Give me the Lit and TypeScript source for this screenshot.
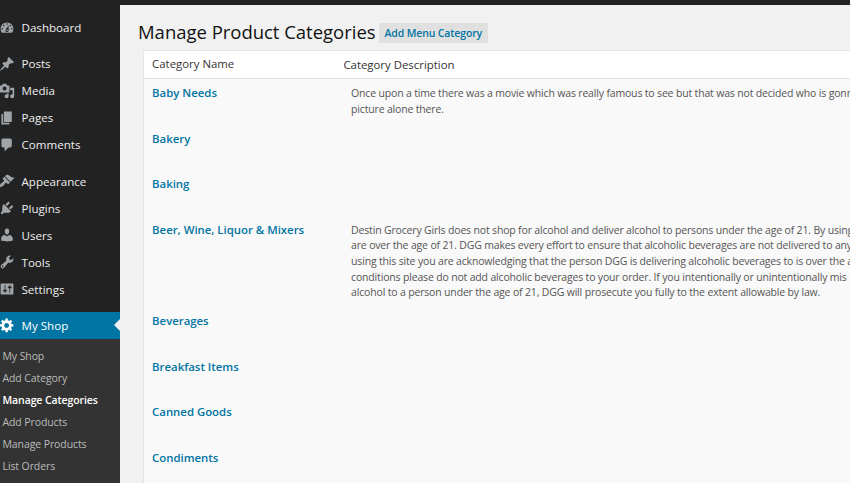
import { LitElement, html, css, svg } from "lit";
import { customElement } from "lit/decorators.js";
import { classMap } from "lit/directives/class-map.js";

const icons: Record<string, string> = {
  dashboard:
    "M3.76 16h12.48c1.1-1.37 1.76-3.11 1.76-5 0-4.42-3.58-8-8-8s-8 3.58-8 8c0 1.89.66 3.63 1.76 5zM10 4c.55 0 1 .45 1 1s-.45 1-1 1-1-.45-1-1 .45-1 1-1zM6 6c.55 0 1 .45 1 1s-.45 1-1 1-1-.45-1-1 .45-1 1-1zm8 0c.55 0 1 .45 1 1s-.45 1-1 1-1-.45-1-1 .45-1 1-1zm-5.37 5.55L12 7v6c0 1.1-.9 2-2 2s-2-.9-2-2c0-.57.24-1.08.63-1.45zM4 10c.55 0 1 .45 1 1s-.45 1-1 1-1-.45-1-1 .45-1 1-1zm12 0c.55 0 1 .45 1 1s-.45 1-1 1-1-.45-1-1 .45-1 1-1zm-5 3c0-.55-.45-1-1-1s-1 .45-1 1 .45 1 1 1 1-.45 1-1z",
  post: "M10.44 3.02l1.82-1.82 6.36 6.35-1.83 1.82c-1.05-.68-2.48-.57-3.41.36l-.75.75c-.92.93-1.04 2.35-.35 3.41l-1.83 1.82-2.41-2.41-2.8 2.79c-.42.42-3.38 2.71-3.8 2.29s1.86-3.39 2.28-3.81l2.79-2.79L4.1 9.36l1.83-1.82c1.05.69 2.48.57 3.4-.36l.75-.75c.93-.92 1.05-2.35.36-3.41z",
  media:
    "M13 11V4c0-.55-.45-1-1-1h-1.67L9 1H5L3.67 3H2c-.55 0-1 .45-1 1v7c0 .55.45 1 1 1h10c.55 0 1-.45 1-1zM7 4.5c1.38 0 2.5 1.12 2.5 2.5S8.38 9.5 7 9.5 4.5 8.38 4.5 7 5.62 4.5 7 4.5zM14 6h5v10.5c0 1.38-1.12 2.5-2.5 2.5S14 17.88 14 16.5s1.12-2.5 2.5-2.5c.17 0 .34.02.5.05V9h-3V6zm-4 8.05V13h2v3.5c0 1.38-1.12 2.5-2.5 2.5S7 17.88 7 16.5 8.12 14 9.5 14c.17 0 .34.02.5.05z",
  page: "M6 15V2h10v13H6zm-1 1h8v2H3V5h2v11z",
  comment:
    "M5 2h9q.82 0 1.41.59T16 4v7q0 .82-.59 1.41T14 13h-2l-5 5v-5H5q-.82 0-1.41-.59T3 11V4q0-.82.59-1.41T5 2z",
  appearance:
    "M14.48 11.06L7.41 3.99l1.5-1.5c.5-.56 2.3-.47 3.51.32 1.21.8 1.43 1.28 2.91 2.1 1.18.64 2.45 1.26 4.45.85zm-.71.71L6.7 4.7 4.93 6.47c-.39.39-.39 1.02 0 1.41l1.06 1.06c.39.39.39 1.03 0 1.42-.6.6-1.43 1.11-2.21 1.69-.35.26-.7.53-1.01.84C1.43 14.23.4 16.08 1.4 17.07c.99 1 2.84-.03 4.18-1.36.31-.31.58-.66.85-1.02.57-.78 1.08-1.61 1.69-2.21.39-.39 1.02-.39 1.41 0l1.06 1.06c.39.39 1.02.39 1.41 0z",
  plugin:
    "M13.11 4.36L9.87 7.6 8 5.73l3.24-3.24c.35-.34 1.05-.2 1.56.32.52.51.66 1.21.31 1.55zm-8 1.77l.91-1.12 9.01 9.01-1.19.84c-.71.71-2.63 1.16-3.82 1.16H6.14L4.9 17.26c-.59.59-1.54.59-2.12 0-.59-.58-.59-1.53 0-2.12l1.24-1.24v-3.88c0-1.13.4-3.19 1.09-3.89zm7.26 3.97l3.24-3.24c.34-.35 1.04-.21 1.55.31.52.51.66 1.21.31 1.55l-3.24 3.25z",
  user: "M10 9.25c-2.27 0-2.73-3.44-2.73-3.44C7 4.02 7.82 2 9.97 2c2.16 0 2.98 2.02 2.71 3.81 0 0-.41 3.44-2.68 3.44zm0 2.57L12.72 10c2.39 0 4.52 2.33 4.52 4.53v2.49s-3.65 1.13-7.24 1.13c-3.65 0-7.24-1.13-7.24-1.13v-2.49c0-2.25 1.94-4.48 4.47-4.48z",
  tools:
    "M16.68 9.77c-1.34 1.34-3.3 1.67-4.95.99l-5.41 6.52c-.99.99-2.59.99-3.58 0s-.99-2.59 0-3.57l6.52-5.42c-.68-1.65-.35-3.61.99-4.95 1.28-1.28 3.12-1.62 4.72-1.06l-2.89 2.89 2.82 2.82 2.86-2.87c.53 1.58.18 3.39-1.08 4.65zM3.81 16.21c.4.39 1.04.39 1.43 0 .4-.4.4-1.04 0-1.43-.39-.4-1.03-.4-1.43 0-.39.39-.39 1.03 0 1.43z",
  settings:
    "M18 16V4c0-.55-.45-1-1-1H3c-.55 0-1 .45-1 1v12c0 .55.45 1 1 1h14c.55 0 1-.45 1-1zM8 11h1c.55 0 1 .45 1 1s-.45 1-1 1H8v1.5c0 .28-.22.5-.5.5s-.5-.22-.5-.5V13H6c-.55 0-1-.45-1-1s.45-1 1-1h1V5.5c0-.28.22-.5.5-.5s.5.22.5.5V11zm5-2h-1c-.55 0-1-.45-1-1s.45-1 1-1h1V5.5c0-.28.22-.5.5-.5s.5.22.5.5V7h1c.55 0 1 .45 1 1s-.45 1-1 1h-1v5.5c0 .28-.22.5-.5.5s-.5-.22-.5-.5V9z",
  gear: "M18 12h-2.18c-.17.7-.44 1.35-.81 1.93l1.54 1.54-2.1 2.1-1.54-1.54c-.58.36-1.23.63-1.91.79V19H8v-2.18c-.68-.16-1.33-.43-1.91-.79l-1.54 1.54-2.12-2.12 1.54-1.54c-.36-.58-.63-1.23-.79-1.91H1V9.03h2.17c.16-.7.44-1.35.8-1.94L2.43 5.55l2.1-2.1 1.54 1.54c.58-.37 1.24-.64 1.93-.81V2h3v2.18c.68.16 1.33.43 1.91.79l1.54-1.54 2.12 2.12-1.54 1.54c.36.59.64 1.24.8 1.94H18V12zm-8.5 1.5c1.66 0 3-1.34 3-3s-1.34-3-3-3-3 1.34-3 3 1.34 3 3 3z",
};

interface MenuItem {
  label: string;
  icon: string;
  current?: boolean;
}

const menu: MenuItem[][] = [
  [{ label: "Dashboard", icon: "dashboard" }],
  [
    { label: "Posts", icon: "post" },
    { label: "Media", icon: "media" },
    { label: "Pages", icon: "page" },
    { label: "Comments", icon: "comment" },
  ],
  [
    { label: "Appearance", icon: "appearance" },
    { label: "Plugins", icon: "plugin" },
    { label: "Users", icon: "user" },
    { label: "Tools", icon: "tools" },
    { label: "Settings", icon: "settings" },
  ],
  [{ label: "My Shop", icon: "gear", current: true }],
];

const submenu = [
  "My Shop",
  "Add Category",
  "Manage Categories",
  "Add Products",
  "Manage Products",
  "List Orders",
];

const categories: { name: string; lines: string[] }[] = [
  {
    name: "Baby Needs",
    lines: [
      "Once upon a time there was a movie which was really famous to see but that was not decided who is gonn",
      "picture alone there.",
    ],
  },
  { name: "Bakery", lines: [] },
  { name: "Baking", lines: [] },
  {
    name: "Beer, Wine, Liquor & Mixers",
    lines: [
      "Destin Grocery Girls does not shop for alcohol and deliver alcohol to persons under the age of 21. By using",
      "are over the age of 21. DGG makes every effort to ensure that alcoholic beverages are not delivered to any",
      "using this site you are acknowledging that the person DGG is delivering alcoholic beverages to is over the a",
      "conditions please do not add alcoholic beverages to your order. If you intentionally or unintentionally mis",
      "alcohol to a person under the age of 21, DGG will prosecute you fully to the extent allowable by law.",
    ],
  },
  { name: "Beverages", lines: [] },
  { name: "Breakfast Items", lines: [] },
  { name: "Canned Goods", lines: [] },
  { name: "Condiments", lines: [] },
];

@customElement("admin-menu")
export class AdminMenu extends LitElement {
  static styles = css`
    :host {
      display: block;
      width: 120px;
      flex: none;
      padding-top: 9px;
      background: #222;
      box-sizing: border-box;
    }
    .group {
      margin-bottom: 9px;
    }
    .group:last-of-type {
      margin-bottom: 0;
    }
    .item {
      display: flex;
      align-items: center;
      height: 27.1px;
      color: #eee;
      font-size: 11.6px;
      line-height: 27px;
      position: relative;
    }
    .item svg {
      width: 16px;
      height: 16px;
      margin-left: -1px;
      margin-right: 6.5px;
      fill: #a0a5aa;
      flex: none;
    }
    .current {
      background: #0074a2;
      color: #fff;
    }
    .current svg {
      fill: #fff;
    }
    .current::after {
      content: "";
      position: absolute;
      right: 0;
      top: 7.3px;
      border: 6.3px solid transparent;
      border-left-width: 0;
      border-right-color: #f1f1f1;
    }
    .sub {
      background: #333;
      height: 145px;
      padding: 6.2px 0 0 2.5px;
      box-sizing: border-box;
    }
    .subitem {
      height: 22px;
      line-height: 22px;
      font-size: 10.5px;
      letter-spacing: -0.1px;
      color: #bbb;
      white-space: nowrap;
    }
    .here {
      color: #fff;
      font-weight: 600;
      letter-spacing: -0.1px;
    }
  `;

  render() {
    return html`
      ${menu.map(
        (group) => html`<div class="group">
          ${group.map(
            (item) => html`<div class=${classMap({ item: true, current: !!item.current })}>
              <svg viewBox="0 0 20 20">${svg`<path fill-rule="evenodd" d=${icons[item.icon]}></path>`}</svg>
              <span>${item.label}</span>
            </div>`
          )}
        </div>`
      )}
      <nav class="sub">
        ${submenu.map(
          (label) =>
            html`<div class=${classMap({ subitem: true, here: label === "Manage Categories" })}>${label}</div>`
        )}
      </nav>
    `;
  }
}

@customElement("category-table")
export class CategoryTable extends LitElement {
  static styles = css`
    :host {
      display: block;
      background: #f9f9f9;
      border: 1px solid #e5e5e5;
      border-right: 0;
      border-bottom: 0;
      box-sizing: border-box;
      white-space: nowrap;
    }
    .head {
      display: flex;
      height: 28px;
      box-sizing: border-box;
      border-bottom: 1px solid #e1e1e1;
      background: #fff;
      color: #333;
      font-size: 11.4px;
      line-height: 26px;
      padding-left: 7.7px;
    }
    .head .name {
      width: 191.3px;
    }
    .head .about {
      padding-top: 1px;
    }
    .row {
      display: flex;
      min-height: 45.6px;
      padding-left: 7.7px;
      box-sizing: border-box;
    }
    .row.long {
      height: 91px;
    }
    .name {
      width: 199px;
      flex: none;
    }
    .row .name {
      color: #0074a2;
      font-weight: 600;
      font-size: 11.4px;
      letter-spacing: -0.01px;
      line-height: 16px;
      padding-top: 6.2px;
    }
    .text {
      padding-top: 7px;
      color: #555;
      font-size: 10.5px;
      letter-spacing: -0.17px;
      line-height: 15.6px;
    }
  `;

  render() {
    return html`
      <div class="head">
        <div class="name">Category Name</div>
        <div class="about">Category Description</div>
      </div>
      ${categories.map(
        (c) => html`<div class=${classMap({ row: true, long: c.lines.length > 2 })}>
          <div class="name">${c.name}</div>
          <div class="text">${c.lines.map((line) => html`<div>${line}</div>`)}</div>
        </div>`
      )}
    `;
  }
}

@customElement("app-root")
export class AppRoot extends LitElement {
  static styles = css`
    :host {
      display: flex;
      flex-direction: column;
      height: 483px;
      overflow: hidden;
      background: #f1f1f1;
      font-family: "Open Sans", "Noto Sans", sans-serif;
    }
    .bar {
      height: 5px;
      flex: none;
      background: #222;
    }
    .body {
      display: flex;
      flex: 1;
      min-height: 0;
    }
    .main {
      flex: 1;
      min-width: 0;
      overflow: hidden;
    }
    .heading {
      display: flex;
      align-items: flex-start;
      height: 45px;
      box-sizing: border-box;
      padding: 14px 0 0 18px;
    }
    .title {
      font-size: 18.5px;
      line-height: 26px;
      font-weight: 400;
      color: #111;
      margin: 0 3px 0 0;
      letter-spacing: -0.02px;
      white-space: nowrap;
    }
    .add {
      background: #e0e0e0;
      color: #0074a2;
      font-size: 10.5px;
      letter-spacing: -0.14px;
      font-weight: 600;
      line-height: 21px;
      height: 20.5px;
      margin-top: 3.5px;
      padding: 0 6px;
      border-radius: 1px;
      white-space: nowrap;
    }
    .table {
      margin-left: 23.4px;
      height: 440px;
    }
  `;

  render() {
    return html`
      <div class="bar"></div>
      <div class="body">
        <admin-menu></admin-menu>
        <div class="main">
          <div class="heading">
            <h2 class="title">Manage Product Categories</h2>
            <a class="add">Add Menu Category</a>
          </div>
          <category-table class="table"></category-table>
        </div>
      </div>
    `;
  }
}
